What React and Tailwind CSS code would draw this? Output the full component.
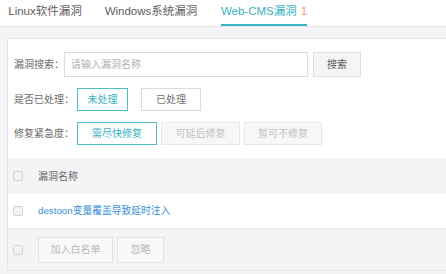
import React from 'react';

const Checkbox = () => (
  <span className="block w-[10px] h-[10px] rounded-[2px] border border-[#d2d2d2] bg-[#f2f2f2]" />
);

const Btn = ({ children, w, variant = 'default', h = 'h-[23px]' }) => {
  const styles = {
    active: 'border-[#4bbdc9] text-[#36b2c1] bg-white',
    default: 'border-[#dcdcdc] text-[#707070] bg-white',
    disabled: 'border-[#e8e8e8] text-[#c2c2c2] bg-[#f7f7f7]',
    search: 'border-[#dedede] text-[#555] bg-[#f5f5f5]',
    ghost: 'border-[#e2e2e2] text-[#b8b8b8] bg-[#f8f8f9]',
  };
  return (
    <div className={`${w} ${h} ${styles[variant]} border flex items-center justify-center text-[10px] shrink-0`}>
      {children}
    </div>
  );
};

export default function App() {
  return (
    <div className="w-[446px] h-[274px] overflow-hidden bg-[#f4f4f6] font-['Liberation_Sans','Noto_Sans_CJK_SC',sans-serif]">
      {/* tabs */}
      <div className="h-[27px] bg-white border-b border-[#e6e6e8] flex text-[11.5px]">
        <div className="ml-[8px] w-[74px] h-[26px] flex items-center justify-center text-[#606060] border-b-2 border-transparent whitespace-nowrap">
          Linux软件漏洞
        </div>
        <div className="ml-[23px] w-[92px] h-[26px] flex items-center justify-center text-[#606060] border-b-2 border-transparent whitespace-nowrap">
          Windows系统漏洞
        </div>
        <div className="ml-[24px] w-[86px] h-[26px] flex items-center justify-center text-[#36b2c1] border-b-2 border-[#3ab5c4] whitespace-nowrap">
          Web-CMS漏洞<span className="ml-[4px] text-[#f09a55]">1</span>
        </div>
      </div>

      <div className="pl-[7px] pt-[11px]">
        <div className="bg-white border border-r-0 border-[#e4e4e6]">
          {/* filters */}
          <div className="pt-[13px] pl-[6px] text-[10px] text-[#6a6a6a]">
            <div className="flex items-center h-[25px]">
              <span className="w-[50px] whitespace-nowrap">漏洞搜索：</span>
              <div className="w-[244px] h-[25px] border border-[#dcdcdc] flex items-center pl-[6px] text-[#b0b0b0]">
                请输入漏洞名称
              </div>
              <div className="ml-[5px]">
                <Btn w="w-[48px]" h="h-[25px]" variant="search">搜索</Btn>
              </div>
            </div>
            <div className="flex items-center h-[23px] mt-[11px]">
              <span className="w-[63px] whitespace-nowrap">是否已处理：</span>
              <Btn w="w-[51px]" variant="active">未处理</Btn>
              <div className="ml-[13px]">
                <Btn w="w-[60px]">已处理</Btn>
              </div>
            </div>
            <div className="flex items-center h-[23px] mt-[11px] gap-[4px]">
              <span className="w-[59px] whitespace-nowrap">修复紧急度：</span>
              <Btn w="w-[80px]" variant="active">需尽快修复</Btn>
              <Btn w="w-[79px]" variant="disabled">可延后修复</Btn>
              <Btn w="w-[78px]" variant="disabled">暂可不修复</Btn>
            </div>
          </div>

          {/* table */}
          <div className="mt-[13px] text-[10px]">
            <div className="h-[36px] bg-[#f4f4f6] flex items-center pl-[5px] text-[#666]">
              <Checkbox />
              <span className="ml-[15px]">漏洞名称</span>
            </div>
            <div className="h-[35px] bg-white flex items-center pl-[5px] border-b border-[#ededef]">
              <Checkbox />
              <span className="ml-[15px] text-[9.75px] text-[#3a8fd8]">destoon变量覆盖导致延时注入</span>
            </div>
            <div className="h-[41px] bg-[#f4f4f6] flex items-center pl-[5px]">
              <Checkbox />
              <div className="ml-[15px] flex gap-[4px]">
                <Btn w="w-[75px]" h="h-[26px]" variant="ghost">加入白名单</Btn>
                <Btn w="w-[47px]" h="h-[26px]" variant="ghost">忽略</Btn>
              </div>
            </div>
          </div>
        </div>
      </div>
    </div>
  );
}
